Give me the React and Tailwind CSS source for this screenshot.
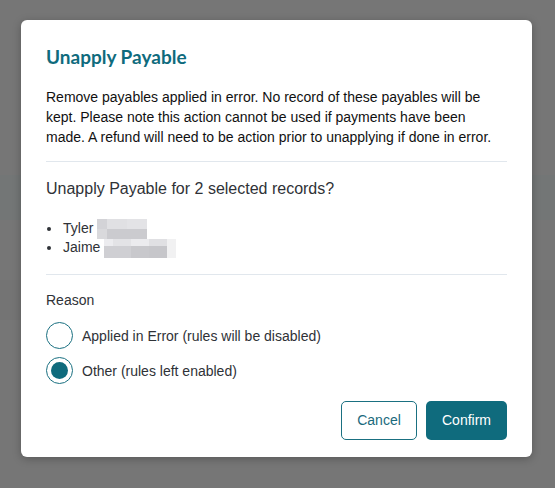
import React, { useState } from 'react';

const TEAL = '#0f6b7d';

// pixelated blur patch standing in for a redacted surname
const Redacted = ({ rows }) => (
  <span className="inline-flex flex-col align-middle">
    {rows.map((row, r) => (
      <span key={r} className="flex">
        {row.map(([w, h, c], i) => (
          <span key={i} style={{ width: w, height: h, background: c }} />
        ))}
      </span>
    ))}
  </span>
);

const RadioOption = ({ label, checked, onSelect }) => (
  <button type="button" onClick={onSelect} className="flex items-center gap-[9px] text-left">
    <span className="w-[27px] h-[27px] rounded-full border-[1.5px] border-[#1a7081] flex items-center justify-center bg-white">
      {checked && <span className="w-[17px] h-[17px] rounded-full bg-[#0f6b7d]" />}
    </span>
    <span className="text-[14px] leading-5 text-[#2f3237]">{label}</span>
  </button>
);

const App = () => {
  const [reason, setReason] = useState('other');

  return (
    <div className="relative w-[555px] h-[488px] overflow-hidden bg-[#767676]" style={{ fontFamily: '"Liberation Sans", Arial, sans-serif' }}>
      {/* Page behind the overlay */}
      <div className="flex flex-col pt-[175px]">
        <div className="h-[45px] bg-[#737676]" />
        <div className="h-[60px]" />
        <div className="h-[40px] bg-[#747474]" />
        <div className="h-[90px]" />
        <div className="pl-[30px] pt-[12px] text-[13px] text-[#6e6e6e]">2022 Clear Town</div>
      </div>

      {/* Modal */}
      <div className="absolute left-[21px] top-[20px] w-[511px] h-[437px] bg-white rounded-[6px] shadow-[0_2px_8px_rgba(0,0,0,0.25)] px-[25px] pt-[25px] flex flex-col">
        <h2 className="text-[19px] leading-6 font-bold" style={{ fontFamily: 'Lato, "Open Sans", sans-serif', color: TEAL }}>
          Unapply Payable
        </h2>
        <p className="mt-[18px] text-[14px] leading-5 text-[#111111]">
          Remove payables applied in error. No record of these payables will be kept. Please note this action cannot be used if payments have been made. A refund will need to be action prior to unapplying if done in error.
        </p>

        <div className="mt-[14px] border-t border-[#e1e7ed]" />

        <div className="mt-[15px] text-[16px] leading-6 text-[#2f3237]">Unapply Payable for 2 selected records?</div>

        <ul className="mt-[17px] list-disc pl-[16px] text-[14px] leading-5 text-[#2f3237]">
          <li className="pl-[1px]">
            Tyler{' '}
            <Redacted
              rows={[
                [[10, 10, '#d3d3d7'], [20, 10, '#e0e0e3'], [20, 10, '#e3e3e6']],
                [[10, 10, '#d9d9dc'], [40, 10, '#cbcbcf']],
              ]}
            />
          </li>
          <li className="pl-[1px] -mt-[2px]">
            Jaime{' '}
            <Redacted
              rows={[
                [[9, 7, '#ececef'], [18, 7, '#e3e3e6'], [18, 7, '#ebebee'], [18, 7, '#e0e0e3'], [9, 7, '#f1f1f2']],
                [[27, 12, '#cfcfd3'], [18, 12, '#c8c8cc'], [18, 12, '#c6c6ca'], [9, 12, '#f1f1f2']],
              ]}
            />
          </li>
        </ul>

        <div className="mt-[16px] border-t border-[#e1e7ed]" />

        <div className="mt-[15px] text-[14px] leading-5 text-[#2f3237]">Reason</div>

        <div className="mt-[12px] flex flex-col gap-[8px]">
          <RadioOption label="Applied in Error (rules will be disabled)" checked={reason === 'error'} onSelect={() => setReason('error')} />
          <RadioOption label="Other (rules left enabled)" checked={reason === 'other'} onSelect={() => setReason('other')} />
        </div>

        <div className="mt-[17px] flex justify-end gap-[9px]">
          <button className="w-[76px] h-[39px] rounded-[5px] border border-[#1a7081] bg-white text-[14px] text-[#1a6a7c]">
            Cancel
          </button>
          <button className="w-[81px] h-[39px] rounded-[5px] bg-[#0f6b7d] text-[14px] text-white">
            Confirm
          </button>
        </div>
      </div>
    </div>
  );
};

export default App;
